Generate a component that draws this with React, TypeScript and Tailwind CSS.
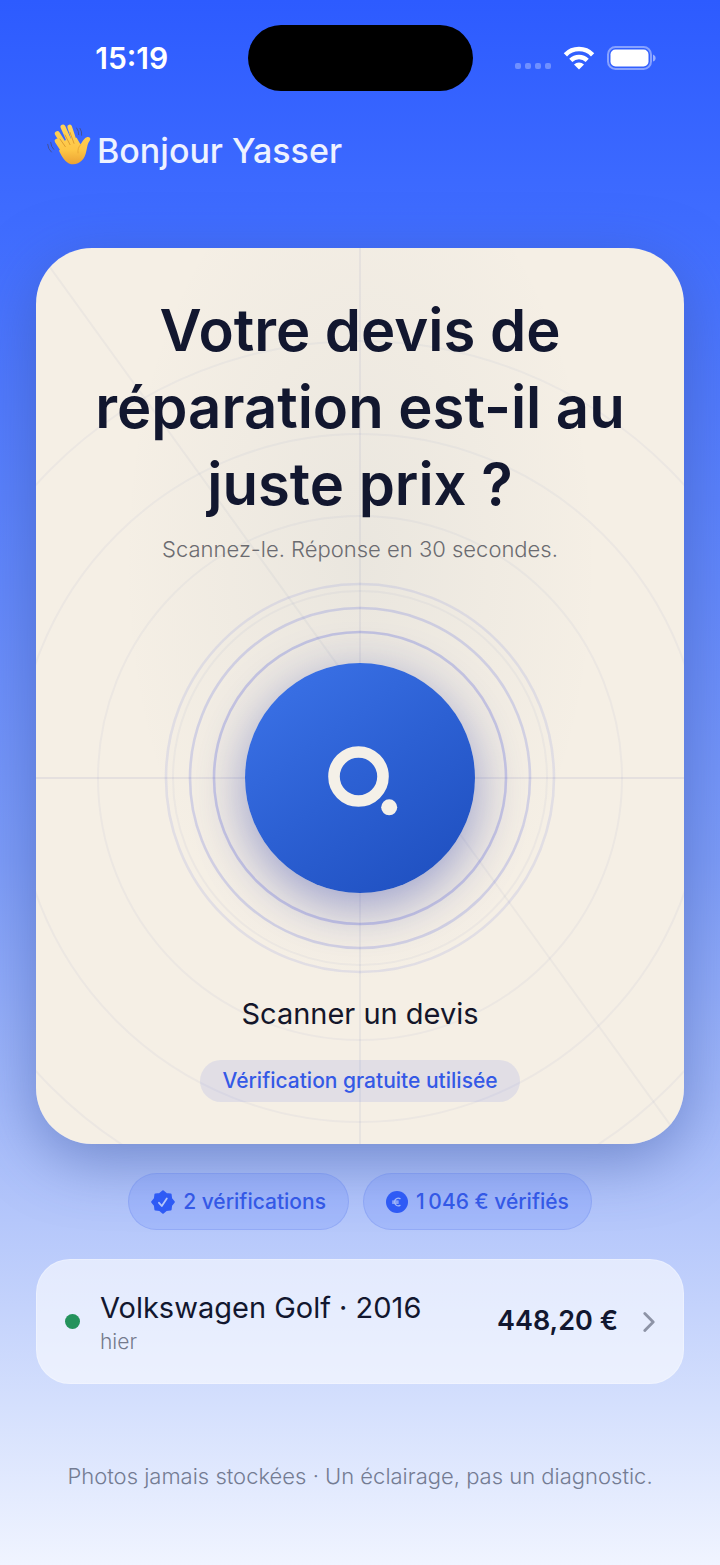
import type { ReactNode } from "react";

const radarRings = [187, 262, 344, 437];

function WifiIcon() {
  return (
    <svg width="32" height="24" viewBox="0 0 32 24" fill="none" aria-hidden="true">
      <path d="M2.4 8.8a19 19 0 0 1 27.2 0" stroke="#fff" strokeWidth="4.6" />
      <path d="M7.8 14.4a11.6 11.6 0 0 1 16.4 0" stroke="#fff" strokeWidth="4.4" />
      <path d="M16 23.6l-5-5.2a7.2 7.2 0 0 1 10 0z" fill="#fff" />
    </svg>
  );
}

function BatteryIcon() {
  return (
    <svg width="50" height="24" viewBox="0 0 50 24" fill="none" aria-hidden="true">
      <rect x="1" y="1" width="43" height="22" rx="7.5" stroke="#fff" strokeOpacity=".42" strokeWidth="2" />
      <rect x="3.5" y="3.5" width="38" height="17" rx="5" fill="#fff" />
      <path d="M46 8.4c1.8.7 2.6 2 2.6 3.6s-.8 2.9-2.6 3.6z" fill="#fff" fillOpacity=".5" />
    </svg>
  );
}

function WavingHand() {
  return (
    <svg width="45" height="44" viewBox="45 35 135 132" fill="none" aria-hidden="true">
      <defs>
        <linearGradient id="skin" x1="0" y1="40" x2="0" y2="162" gradientUnits="userSpaceOnUse">
          <stop offset="0" stopColor="#ffd45c" />
          <stop offset=".65" stopColor="#fdc645" />
          <stop offset="1" stopColor="#eba233" />
        </linearGradient>
      </defs>
      <g stroke="#434d86" strokeWidth="2.5" strokeLinecap="round">
        <path d="M59 96q1 13 9 21M50 102q1 14 11 23M137 53q7 10 6 20M147 54q7 11 5 21" />
      </g>
      <g stroke="url(#skin)" strokeLinecap="round">
        <path d="M78 92l22 34" strokeWidth="14" />
        <path d="M79 70l30 48" strokeWidth="15" />
        <path d="M96 50l25 56" strokeWidth="15" />
        <path d="M116 50l18 54" strokeWidth="14" />
      </g>
      <path
        d="M88 117L104 88L137 82C142 90 145 97 149 102C154 94 160 82 169 80C176 79 180 84 177 90C170 98 169 108 166 122C162 146 147 161 127 162C108 162 96 146 84 121Z"
        fill="url(#skin)"
      />
      <path
        d="M87 86l16 23M102 74l15 29M117 66l12 33"
        stroke="#c9801f"
        strokeOpacity=".75"
        strokeWidth="2.5"
        strokeLinecap="round"
      />
      <path d="M149 103q-10 9-8 25" stroke="#dc942a" strokeOpacity=".7" strokeWidth="2.5" strokeLinecap="round" />
    </svg>
  );
}

function SealIcon() {
  return (
    <svg width="24" height="24" viewBox="0 0 24 24" aria-hidden="true">
      <path
        d="M12 1.2L15.3 3.9L19.6 4.4L20.1 8.7L22.8 12L20.1 15.3L19.6 19.6L15.3 20.1L12 22.8L8.7 20.1L4.4 19.6L3.9 15.3L1.2 12L3.9 8.7L4.4 4.4L8.7 3.9Z"
        fill="#2f5bf5"
        stroke="#2f5bf5"
        strokeWidth="2"
        strokeLinejoin="round"
      />
      <path
        d="M8 12.8l2.8 3.2 5-7.6"
        fill="none"
        stroke="#b3c5fa"
        strokeWidth="1.8"
        strokeLinecap="round"
        strokeLinejoin="round"
      />
    </svg>
  );
}

function EuroIcon() {
  return (
    <svg width="22" height="22" viewBox="0 0 22 22" fill="none" aria-hidden="true">
      <circle cx="11" cy="11" r="11" fill="#2f5bf5" />
      <path
        d="M14 7.6a3.8 3.8 0 1 0 0 6.8M6.6 10.1h5.6M6.6 12h5.6"
        stroke="#a3b9f8"
        strokeWidth="1.3"
        strokeLinecap="round"
      />
    </svg>
  );
}

function StatPill({ icon, children }: { icon: ReactNode; children: ReactNode }) {
  return (
    <li className="flex h-[57px] items-center rounded-full border border-[#5f7fe6]/25 bg-[#3763ff]/14 px-[22px] text-[21px] font-medium text-[#3459e6]">
      {icon}
      {children}
    </li>
  );
}

function Radar() {
  return (
    <svg
      className="pointer-events-none absolute top-1/2 left-1/2 -translate-x-1/2 -translate-y-1/2"
      width="1200"
      height="1200"
      viewBox="-600 -600 1200 1200"
      fill="none"
      aria-hidden="true"
    >
      <path d="M-600 0H600" stroke="#5560b0" strokeOpacity=".1" strokeWidth="2" />
      <g stroke="#5f70b8" strokeOpacity=".06" strokeWidth="2">
        {radarRings.map((r) => (
          <circle key={r} r={r} />
        ))}
      </g>
      <g stroke="#5562e0" strokeWidth="2.6">
        <circle r="146" strokeOpacity=".28" />
        <circle r="170" strokeOpacity=".21" />
        <circle r="194" strokeOpacity=".12" />
      </g>
    </svg>
  );
}

function ScanCard() {
  return (
    <section className="relative isolate flex flex-col items-center overflow-hidden rounded-[56px] bg-[#f5efe5] px-10 pt-11 pb-[42px]">
      <div className="absolute inset-0 -z-10 bg-[radial-gradient(ellipse_at_50%_35%,rgba(90,115,140,0.07),transparent_52%)]" />
      <svg className="absolute inset-0 -z-10 size-full" viewBox="0 0 100 100" preserveAspectRatio="none" aria-hidden="true">
        <g stroke="#5560a0" strokeWidth="2">
          <path d="M0 0L100 100" strokeOpacity=".05" vectorEffect="non-scaling-stroke" />
          <path d="M50 0V100" strokeOpacity=".08" vectorEffect="non-scaling-stroke" />
        </g>
      </svg>

      <h1 className="text-center text-[58px] leading-[77px] font-semibold text-[#12172f]">
        Votre devis de
        <br />
        réparation est-il au
        <br />
        juste prix ?
      </h1>
      <p className="mt-2.5 text-[22px] leading-8 font-light text-[#6b6b70]">Scannez-le. Réponse en 30 secondes.</p>

      <div className="relative -z-10 mt-[98px]">
        <Radar />
        <button
          type="button"
          aria-labelledby="scan-label"
          className="relative grid size-[230px] place-items-center rounded-full bg-linear-145 from-[#3d74ea] via-[#2c60d3] to-[#1d4dbd] shadow-[0_14px_52px_rgba(52,70,180,0.48)]"
        >
          <svg className="overflow-visible" width="72" height="72" viewBox="0 0 72 72" aria-hidden="true">
            <circle cx="34.5" cy="34.5" r="24.5" fill="none" stroke="#f4f0e8" strokeWidth="11.6" />
            <circle cx="65.2" cy="65.3" r="8" fill="#f4f0e8" />
          </svg>
        </button>
      </div>

      <p id="scan-label" className="mt-[101px] text-[29px] leading-10 text-[#14162a]">
        Scanner un devis
      </p>
      <p className="mt-[26px] flex h-[42px] items-center rounded-full bg-[#3d5cf0]/11 px-[22px] text-[21px] font-medium text-[#3459e6]">
        Vérification gratuite utilisée
      </p>
    </section>
  );
}

export default function App() {
  return (
    <div className="min-h-dvh bg-[linear-gradient(180deg,#2d5bff_0%,#3f6cff_14%,#7d9cf8_55%,#b5c7fb_78%,#d5e0fd_90%,#f0f4ff_100%)] font-[Inter,sans-serif]">
      <header className="grid grid-cols-[1fr_225px_1fr] items-center pt-[25px] text-white">
        <time className="pl-4 text-center text-[30px] font-semibold">15:19</time>
        <div className="h-[66px] rounded-full bg-black" />
        <div className="flex items-center pl-[42px]">
          <div className="mt-4 flex gap-1">
            <i className="size-1.5 rounded-xs bg-white/30" />
            <i className="size-1.5 rounded-xs bg-white/30" />
            <i className="size-1.5 rounded-xs bg-white/30" />
            <i className="size-1.5 rounded-xs bg-white/30" />
          </div>
          <div className="ml-3 flex items-center gap-3">
            <WifiIcon />
            <BatteryIcon />
          </div>
        </div>
      </header>

      <main className="px-9">
        <div className="mt-[31px] flex items-start gap-1.5 pl-2.5">
          <WavingHand />
          <p className="pt-1 text-[34px] leading-[50px] font-medium text-[#eef2ff]">Bonjour Yasser</p>
        </div>

        <div className="mt-[72px] rounded-[56px] shadow-[0_16px_60px_rgba(60,85,160,0.5)]">
          <ScanCard />
        </div>

        <ul className="mt-[29px] flex justify-center gap-3.5">
          <StatPill icon={<SealIcon />}>
            <span className="ml-2">2 vérifications</span>
          </StatPill>
          <StatPill icon={<EuroIcon />}>
            <span className="ml-2">1&#8239;046 € vérifiés</span>
          </StatPill>
        </ul>

        <a
          href="#volkswagen-golf"
          className="mt-[29px] flex h-[125px] items-center rounded-[34px] border border-white/25 bg-white/58 px-7 text-[#12172f]"
        >
          <span className="size-[15px] rounded-full bg-[#24925c]" />
          <span className="ml-5 flex flex-1 flex-col pt-1">
            <span className="text-[29px] leading-9">Volkswagen Golf · 2016</span>
            <span className="text-[21px] leading-8 font-light text-[#747a8c]">hier</span>
          </span>
          <span className="text-[27px] font-semibold">448,20 €</span>
          <svg className="ml-[25px]" width="12" height="22" viewBox="0 0 12 22" fill="none" aria-hidden="true">
            <path d="M1.8 2.4L10.2 11l-8.4 8.6" stroke="#8d93a6" strokeWidth="2.8" strokeLinecap="round" strokeLinejoin="round" />
          </svg>
        </a>

        <p className="pt-[76px] pb-[73px] text-center text-[22px] leading-8 font-light text-[#747c93]">
          Photos jamais stockées · Un éclairage, pas un diagnostic.
        </p>
      </main>
    </div>
  );
}
